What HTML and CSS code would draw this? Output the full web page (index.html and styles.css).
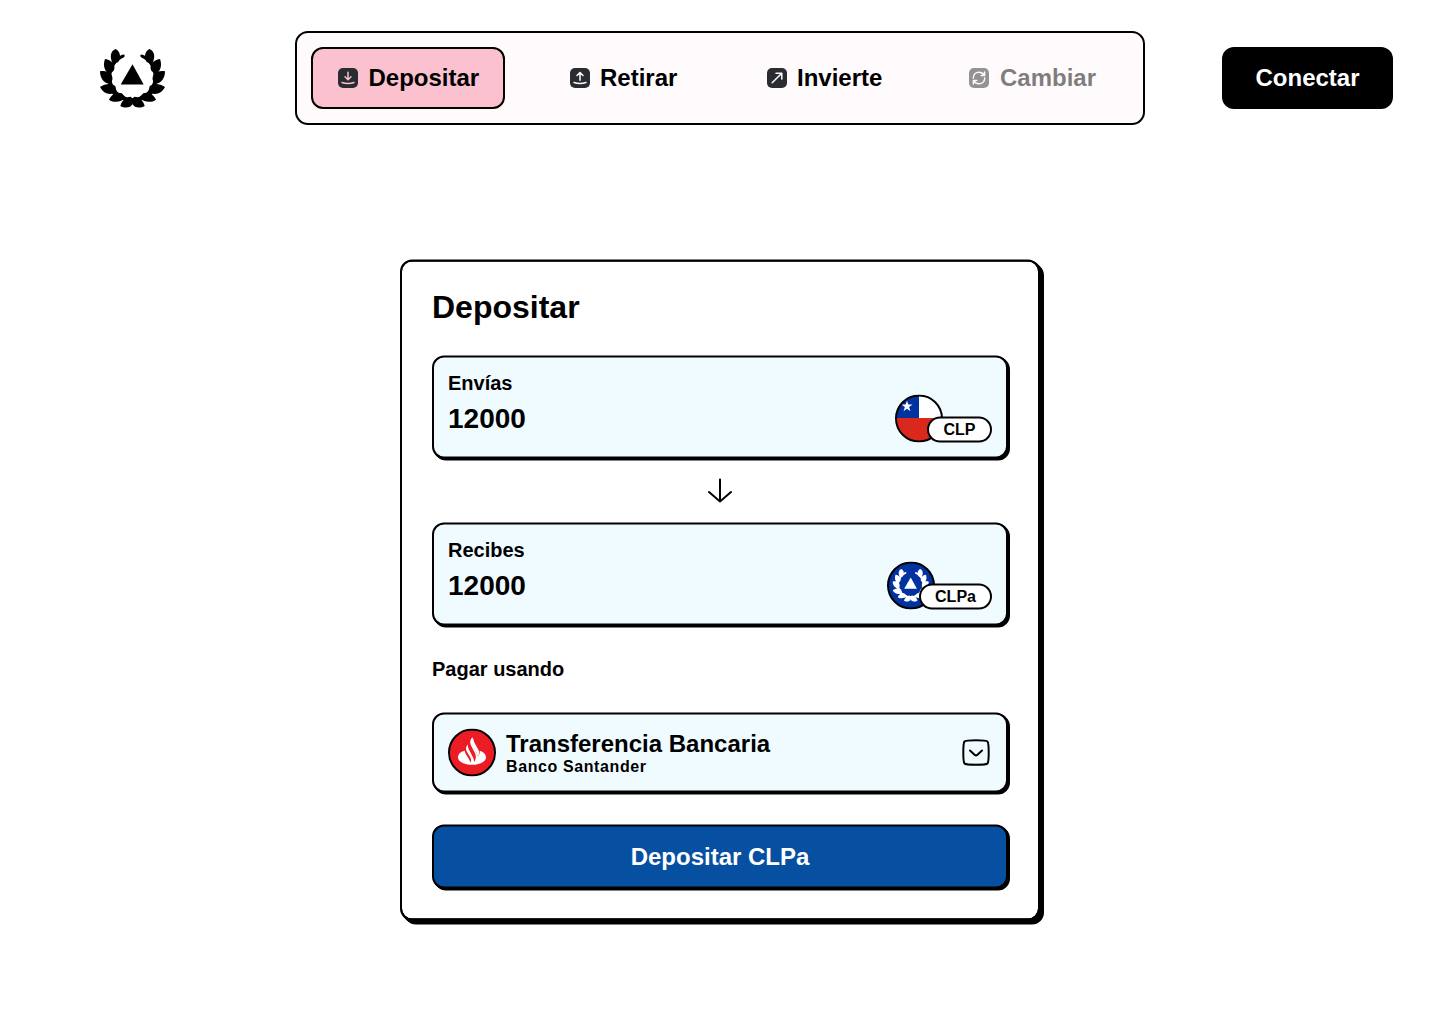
FILE: index.html
```html
<!DOCTYPE html>
<html lang="es">
<head>
<meta charset="utf-8">
<title>Depositar</title>
<link rel="stylesheet" href="styles.css">
</head>
<body>
<svg class="defs" aria-hidden="true">
  <symbol id="laurel" viewBox="0 0 258 240">
    <path d="M127.500 79L161 139.500H92Z"/>
    <g id="branch">
      <path d="M103 50Q106 54 102 58C79 68 64 90 64 116C64 151 92 180 127.500 180V184C112 186 98 190 82 181C62 168 53 145 53 116C54 90 70 67 88 55Q98 47 103 50Z"/>
      <path d="M77 33C60 40 59 57 68 77L84 73C93 60 93 42 77 33Z"/>
      <path d="M45 63C38 82 43 101 60 108L71 98C79 83 66 66 45 63Z"/>
      <path d="M30 100C30 121 41 135 60 139L67 126C70 106 52 96 30 100Z"/>
      <path d="M30 147C41 168 61 173 80 162L76 145C65 134 45 137 30 147Z"/>
      <path d="M57 185C72 196 95 193 107 178L95 166C78 160 64 171 57 185Z"/>
      <path d="M91 204C109 213 131 210 130 184L122 176C105 177 95 189 91 204Z"/>
    </g>
    <use href="#branch" transform="matrix(-1 0 0 1 255 0)"/>
  </symbol>
</svg>

<header class="header">
  <svg class="logo"><use href="#laurel"/></svg>
  <nav class="nav">
    <a class="nav-item active">
      <svg class="icon" viewBox="0 0 24 24"><rect x="2" y="2" width="20" height="20" rx="5"/><path d="M12 6.200v7.300M9 10.700l3 3 3-3M6 16.500q6 2 12 0"/></svg>
      <span>Depositar</span>
    </a>
    <a class="nav-item">
      <svg class="icon" viewBox="0 0 24 24"><rect x="2" y="2" width="20" height="20" rx="5"/><path d="M12 14.300V6.800M9 9.500l3-3 3 3M6 16.500q6 2 12 0"/></svg>
      <span>Retirar</span>
    </a>
    <a class="nav-item">
      <svg class="icon" viewBox="0 0 24 24"><rect x="2" y="2" width="20" height="20" rx="5"/><path d="M7.200 16.800l9.300-9.300M11 7.200h5.800V13"/></svg>
      <span>Invierte</span>
    </a>
    <a class="nav-item disabled">
      <svg class="icon" viewBox="0 0 24 24"><rect x="2" y="2" width="20" height="20" rx="5"/><path d="M6.300 12C6.300 8.500 8.800 6.300 12 6.300c2.200 0 4 1 5.200 2.900M17.600 6v3.400H14.200M17.700 12c0 3.500-2.500 5.700-5.700 5.700-2.200 0-4-1-5.200-2.900M6.400 18v-3.400H9.800"/></svg>
      <span>Cambiar</span>
    </a>
  </nav>
  <button class="connect">Conectar</button>
</header>

<main class="card">
  <h1 class="title">Depositar</h1>
  <section class="box amount">
    <div class="label">Envías</div>
    <div class="row">
      <span class="value">12000</span>
      <div class="currency">
        <svg class="coin" viewBox="0 0 48 48">
          <clipPath id="round"><circle cx="24" cy="24" r="23"/></clipPath>
          <g clip-path="url(#round)"><path fill="#fff" d="M0 0h48v24H0z"/><path fill="#0032a0" d="M0 0h24v23.500H0z"/><path fill="#da291c" d="M0 23.500h48V48H0z"/></g>
          <path fill="#fff" d="M12 6l1.300 4h4.300l-3.500 2.600 1.400 4.200-3.500-2.600-3.500 2.600 1.400-4.200L6.400 10h4.300z"/>
          <circle class="rim" cx="24" cy="24" r="23"/>
        </svg>
        <span class="pill">CLP</span>
      </div>
    </div>
  </section>
  <svg class="arrow" viewBox="0 0 32 32"><path d="M16 5v22M5 17.500L16 27l11-9.500"/></svg>
  <section class="box amount">
    <div class="label">Recibes</div>
    <div class="row">
      <span class="value">12000</span>
      <div class="currency">
        <svg class="coin" viewBox="0 0 48 48">
          <circle class="rim blue" cx="24" cy="24" r="23"/>
          <use href="#laurel" x="0.200" y="1.500" width="47.600" height="44.300" fill="#fff"/>
        </svg>
        <span class="pill wide">CLPa</span>
      </div>
    </div>
  </section>
  <h2 class="label pay">Pagar usando</h2>
  <section class="box method">
    <svg class="coin" viewBox="0 0 144 144">
      <circle cx="72" cy="72" r="69" fill="#ec1c24" stroke="#000" stroke-width="6"/>
      <path fill="#fff" d="M50 67C37 70 30 78 30 87C30 99 49 109 72 109C95 109 114 99 114 87C114 78 106 70 95 67C96 74 94 79 90 84C88 76 83 69 79 62C74 53 71 45 73 26C66 34 65 43 69 51L81 74C85 82 84 91 79 101C78 92 74 84 69 75L63 64C60 58 59 53 60 47C52 56 53 62 57 70L67 87C70 93 70 98 67 102C65 93 60 87 56 81Q51 74 50 67Z"/>
      <path fill="#fff" d="M73 26C78 34 77 39 81 46L91 64C95 71 95 79 90 84C88 74 80 67 76 58C70 46 71 37 73 26Z"/>
    </svg>
    <div class="method-text">
      <div class="method-name">Transferencia Bancaria</div>
      <div class="method-bank">Banco Santander</div>
    </div>
    <svg class="chevron" viewBox="0 0 32 32"><path d="M16 3.800c7.600 0 10.600 0 11.500 1.200s1.200 5 1.200 11-.2 9.800-1.200 11S24 28.200 16 28.200 5.500 28.200 4.500 27 3.300 22 3.300 16s.2-9.800 1.200-11S8.400 3.800 16 3.800zM10 14l4.800 4.400q1.200 1 2.400 0L22 14"/></svg>
  </section>
  <button class="submit">Depositar CLPa</button>
</main>
</body>
</html>
```
FILE: styles.css
```css
* { box-sizing: border-box; }

body {
  margin: 0;
  min-height: 100vh;
  background: #fff;
  color: #000;
  font-family: "Liberation Sans", Arial, sans-serif;
  font-weight: 700;
}

button { font: inherit; border: 0; }
svg { display: block; flex: none; }
.defs { position: absolute; width: 0; height: 0; }

.header {
  display: flex;
  align-items: center;
  justify-content: space-between;
  padding: 31px 47px 0 90px;
}

.logo { width: 86px; height: 80px; margin-right: 42px; }

.nav {
  display: grid;
  grid-template-columns: 231px 197px 202px auto;
  justify-items: start;
  width: 850px;
  height: 94px;
  padding: 14px;
  border: 2px solid #000;
  border-radius: 13px;
  background: #fffbfc;
}

.nav-item {
  display: flex;
  align-items: center;
  gap: 9px;
  height: 62px;
  padding: 0 23px;
  border: 2px solid transparent;
  border-radius: 12px;
  font-size: 24px;
  line-height: 28px;
}

.nav-item.active { width: 194px; gap: 8.500px; background: #fbc1ce; border-color: #000; }
.nav-item:not(.active) { padding-left: 24px; gap: 8px; }
.nav-item.disabled { gap: 9px; opacity: .5; }

.icon { width: 24px; height: 24px; }
.icon rect { fill: #292d32; }
.icon path {
  fill: none;
  stroke: #fffbfc;
  stroke-width: 1.5;
  stroke-linecap: round;
  stroke-linejoin: round;
}
.active .icon path { stroke: #fbc1ce; }

.connect {
  width: 171px;
  height: 62px;
  border-radius: 12px;
  background: #000;
  color: #fff;
  font-size: 24px;
}

.card {
  display: flex;
  flex-direction: column;
  width: 640px;
  margin: 135px auto 0;
  padding: 30px;
  border: 2px solid #000;
  border-radius: 12px;
  background: linear-gradient(#fff, #fff) padding-box, #000;
  box-shadow: 1px 1px 0 #000, 2px 2px 0 #000, 3px 3px 0 #000, 4px 4px 0 #000;
  transform: translateY(-.5px);
}

.title { margin: -1px 0 33px; font-size: 32px; line-height: 32px; }

.box {
  border: 2px solid #000;
  border-radius: 12px;
  box-shadow: 1px 1px 0 #000, 2px 2px 0 #000;
  background: #f0fbff;
  padding: 14px;
}

.amount { height: 103px; }
.label { font-size: 20px; line-height: 23px; }
.row { display: flex; justify-content: space-between; align-items: center; }
.value { font-size: 28px; line-height: 32px; }
.currency { display: flex; align-items: flex-end; }
.coin { width: 48px; height: 48px; }
.rim { fill: none; stroke: #000; stroke-width: 2; }
.rim.blue { fill: #0032a0; }

.pill {
  position: relative;
  width: 65px;
  height: 26px;
  margin-left: -16px;
  border: 2px solid #000;
  border-radius: 13px;
  background: #fff;
  font-size: 16px;
  line-height: 22px;
  text-align: center;
}
.pill.wide { width: 73px; }

.arrow { width: 32px; height: 32px; margin: 16px auto; }
.arrow path, .chevron path {
  fill: none;
  stroke: #000;
  stroke-width: 2;
  stroke-linecap: round;
  stroke-linejoin: round;
}

.pay { margin: 32px 0; }

.method { display: flex; align-items: center; gap: 10px; height: 80px; }
.method-text { flex: 1; }
.method-name { font-size: 24px; line-height: 28px; }
.method-bank { font-size: 16px; line-height: 18px; letter-spacing: .6px; }
.chevron { width: 32px; height: 32px; }

.submit {
  height: 64px;
  margin-top: 32px;
  border: 2px solid #000;
  border-radius: 12px;
  box-shadow: 1px 1px 0 #000, 2px 2px 0 #000;
  background: #074fa1;
  color: #fff;
  font-size: 24px;
}
```
